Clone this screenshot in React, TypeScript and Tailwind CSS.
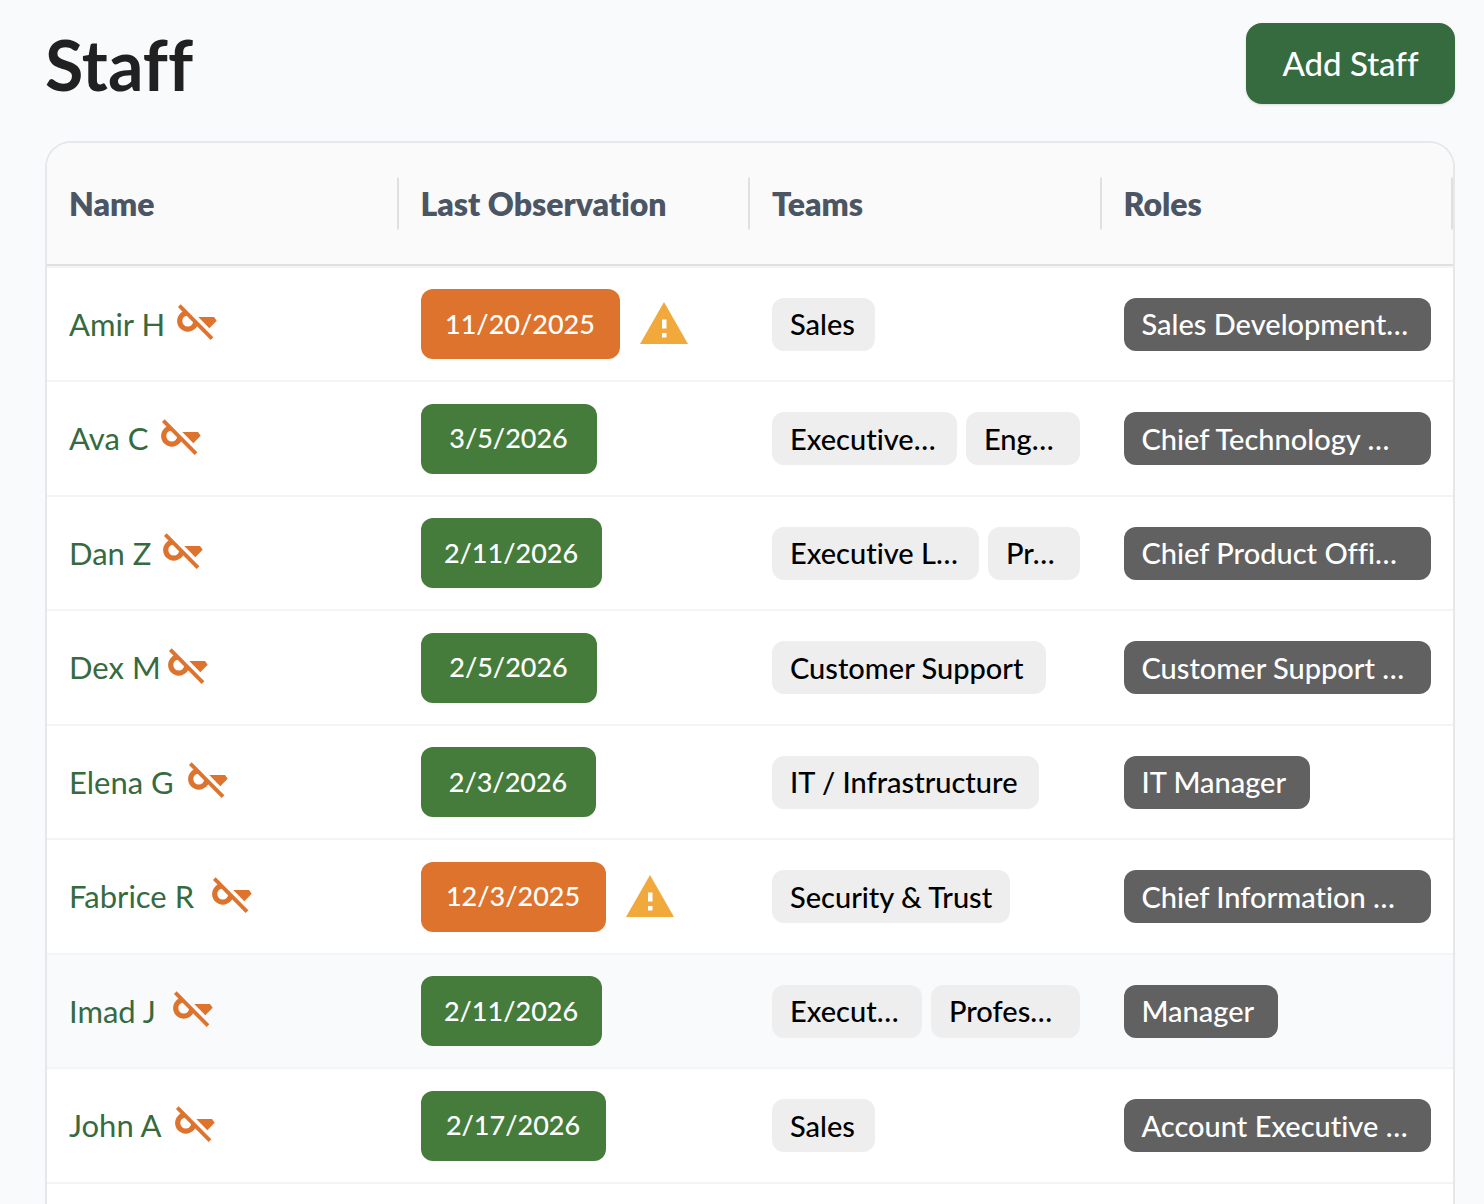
import { useId } from "react";

type Chip = { label: string; width: string };
type Staff = {
  name: string;
  nameWidth: string;
  date: string;
  dateWidth: string;
  overdue?: boolean;
  teams: Chip[];
  role: Chip;
  active?: boolean;
};

const staff: Staff[] = [
  { name: "Amir H", nameWidth: "w-[96px]", date: "11/20/2025", dateWidth: "w-[199px]", overdue: true, teams: [{ label: "Sales", width: "w-[103px]" }], role: { label: "Sales Development…", width: "w-[307px]" } },
  { name: "Ava C", nameWidth: "w-[80px]", date: "3/5/2026", dateWidth: "w-[176px]", teams: [{ label: "Executive…", width: "w-[185px]" }, { label: "Eng…", width: "w-[114px]" }], role: { label: "Chief Technology …", width: "w-[307px]" } },
  { name: "Dan Z", nameWidth: "w-[82px]", date: "2/11/2026", dateWidth: "w-[181px]", teams: [{ label: "Executive L…", width: "w-[207px]" }, { label: "Pr…", width: "w-[92px]" }], role: { label: "Chief Product Offi…", width: "w-[307px]" } },
  { name: "Dex M", nameWidth: "w-[87px]", date: "2/5/2026", dateWidth: "w-[176px]", teams: [{ label: "Customer Support", width: "w-[274px]" }], role: { label: "Customer Support …", width: "w-[307px]" } },
  { name: "Elena G", nameWidth: "w-[107px]", date: "2/3/2026", dateWidth: "w-[175px]", teams: [{ label: "IT / Infrastructure", width: "w-[267px]" }], role: { label: "IT Manager", width: "w-[186px]" } },
  { name: "Fabrice R", nameWidth: "w-[131px]", date: "12/3/2025", dateWidth: "w-[185px]", overdue: true, teams: [{ label: "Security & Trust", width: "w-[238px]" }], role: { label: "Chief Information …", width: "w-[307px]" } },
  { name: "Imad J", nameWidth: "w-[92px]", date: "2/11/2026", dateWidth: "w-[181px]", teams: [{ label: "Execut…", width: "w-[150px]" }, { label: "Profes…", width: "w-[149px]" }], role: { label: "Manager", width: "w-[154px]" }, active: true },
  { name: "John A", nameWidth: "w-[94px]", date: "2/17/2026", dateWidth: "w-[185px]", teams: [{ label: "Sales", width: "w-[103px]" }], role: { label: "Account Executive …", width: "w-[307px]" } },
];

const columns = ["Name", "Last Observation", "Teams", "Roles"];

function KeyOffIcon() {
  const id = useId();
  return (
    <svg viewBox="0 2 44 44" className="size-11 shrink-0" role="img" aria-label="No key access">
      <clipPath id={id}>
        <path d="M0 1.4 L42.6 44 H0Z" />
      </clipPath>
      <circle cx="12.8" cy="21" r="8.1" fill="none" stroke="#dd732d" strokeWidth="5.2" clipPath={`url(#${id})`} />
      <path d="M4.3 5.7 37 38.7" stroke="#dd732d" strokeWidth="3.8" />
      <path d="M23.3 17H39L41.7 20.7 34.3 28.3Z" fill="#dd732d" />
    </svg>
  );
}

function WarningIcon() {
  return (
    <svg viewBox="0 0 48 44" className="h-11 w-12 shrink-0" role="img" aria-label="Observation overdue">
      <path d="M24 0 48 42H0Z" fill="#f1a93c" />
      <path d="M22 17.5h4.5v9H22zM22 31h4.5v4.5H22z" fill="#fff" />
    </svg>
  );
}

export default function App() {
  return (
    <main className="flex h-screen flex-col overflow-hidden bg-[#f9fafc] pt-[23px] pr-[29px] pl-[45px] font-['Lato',sans-serif] [font-variant-ligatures:none]">
      <header className="flex h-[81px] shrink-0 items-center justify-between">
        <h1 className="text-[70px] leading-[80px] font-bold text-[#212121]">Staff</h1>
        <button className="h-[81px] w-[209px] rounded-2xl bg-[#366a3f] text-[33px] font-medium text-white shadow-sm">
          Add Staff
        </button>
      </header>

      <section className="mt-[37px] min-h-0 flex-1 overflow-hidden rounded-t-[26px] border-2 border-b-0 border-[#e5e7eb] bg-white">
        <table className="w-full table-fixed border-separate border-spacing-0">
          <thead>
            <tr>
              {columns.map((column) => (
                <th
                  key={column}
                  scope="col"
                  className="h-[123px] border-b-2 border-[#e0e0e0] bg-[#fafafa] p-0 text-left text-[32px] font-extrabold text-[#4b5563]"
                >
                  <div className="flex h-[53px] items-center rounded-xs border-r-2 border-[#e0e0e0] pl-[22px]">{column}</div>
                </th>
              ))}
            </tr>
          </thead>
          <tbody>
            {staff.map((person) => (
              <tr
                key={person.name}
                className={`h-[114px] first:h-[116px] even:h-[115px] [&:first-child>td]:border-t-2 [&>td]:border-[#f3f4f6] [&>td]:border-b-2 [&>td]:p-0 [&>td]:pl-[22px] ${person.active ? "bg-[#f9fafc]" : "bg-white"}`}
              >
                <td>
                  <div className="flex items-center gap-[10px]">
                    <a href="#" className={`${person.nameWidth} text-[31px] whitespace-nowrap text-[#366a3f]`}>
                      {person.name}
                    </a>
                    <KeyOffIcon />
                  </div>
                </td>
                <td>
                  <div className="flex items-center gap-5">
                    <span
                      className={`${person.dateWidth} ${person.overdue ? "bg-[#dd732d]" : "bg-[#467c3b]"} flex h-[70px] items-center justify-center rounded-xl text-[27px] font-medium text-white`}
                    >
                      {person.date}
                    </span>
                    {person.overdue && <WarningIcon />}
                  </div>
                </td>
                <td>
                  <div className="flex gap-[9px]">
                    {person.teams.map((team) => (
                      <span
                        key={team.label}
                        className={`${team.width} flex h-[53px] items-center rounded-xl bg-[#eeeeee] pl-[18px] text-[29px] font-medium whitespace-nowrap text-black`}
                      >
                        {team.label}
                      </span>
                    ))}
                  </div>
                </td>
                <td>
                  <span
                    className={`${person.role.width} flex h-[53px] items-center rounded-xl bg-[#616161] pl-[18px] text-[29px] font-medium whitespace-nowrap text-white`}
                  >
                    {person.role.label}
                  </span>
                </td>
              </tr>
            ))}
          </tbody>
        </table>
      </section>
    </main>
  );
}
